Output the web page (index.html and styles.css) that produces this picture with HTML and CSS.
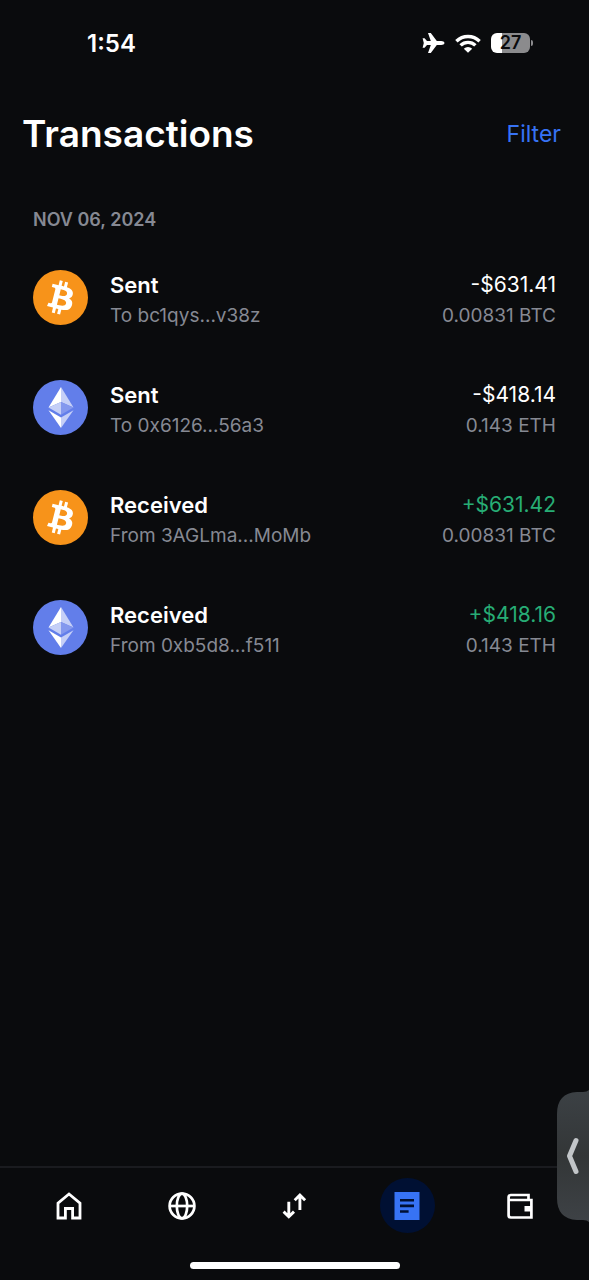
FILE: index.html
```html
<!DOCTYPE html>
<html lang="en">
<head>
<meta charset="utf-8">
<meta name="viewport" content="width=device-width, initial-scale=1">
<title>Transactions</title>
<link rel="stylesheet" href="styles.css">
</head>
<body>
<svg class="defs" aria-hidden="true">
  <symbol id="btc" viewBox="0 0 32 32">
    <circle cx="16" cy="16" r="16" fill="#f7931a"/>
    <path fill="#fff" d="M23.189 14.02c.314-2.096-1.283-3.223-3.465-3.975l.708-2.84-1.728-.43-.69 2.765c-.454-.114-.92-.22-1.385-.326l.695-2.783L15.596 6l-.708 2.839c-.376-.086-.746-.17-1.104-.26l.002-.009-2.384-.595-.46 1.846s1.283.294 1.256.312c.7.175.826.638.805 1.006l-.806 3.235c.048.012.11.03.18.057l-.183-.045-1.13 4.532c-.086.212-.303.531-.793.41.018.025-1.256-.313-1.256-.313l-.858 1.978 2.25.561c.418.105.828.215 1.231.318l-.715 2.872 1.727.43.708-2.84c.472.127.93.245 1.378.357l-.706 2.828 1.728.43.715-2.866c2.948.558 5.164.333 6.097-2.333.752-2.146-.037-3.385-1.588-4.192 1.13-.26 1.98-1.003 2.207-2.538zm-3.95 5.538c-.533 2.147-4.148.986-5.32.695l.95-3.805c1.172.293 4.929.872 4.37 3.11zm.535-5.569c-.487 1.953-3.495.96-4.47.717l.86-3.45c.975.243 4.118.696 3.61 2.733z"/>
  </symbol>
  <symbol id="eth" viewBox="0 0 55 55">
    <circle cx="27.500" cy="27.500" r="27.500" fill="#627eea"/>
    <path fill="#fff" d="M28 7 15.500 27.400 28 22z"/>
    <path fill="#c5cff7" d="M28 7 40.500 27.400 28 22z"/>
    <path fill="#c5cff7" d="M15.500 27.400 28 22v12.800z"/>
    <path fill="#8498ee" d="M40.500 27.400 28 22v12.800z"/>
    <path fill="#fff" d="M15.500 30.300 28 37.600V48z"/>
    <path fill="#c5cff7" d="M40.500 30.300 28 37.600V48z"/>
  </symbol>
</svg>

<div class="screen">
  <div class="status">
    <span class="time">1:54</span>
    <div class="indicators">
      <svg class="plane" viewBox="0 0 23 22" fill="#fff" aria-label="Airplane mode"><path d="M22.500 11c0 1.100-1.600 2-3.300 2h-4.400L8.800 21H6l2.800-8H5l-2.400 2.700H.6L1.800 11 .6 6.300h2L5 9h3.800L6 1h2.800l6 8h4.400c1.700 0 3.300.9 3.300 2z"/></svg>
      <svg class="wifi" viewBox="0 0 26 19" fill="none" stroke="#fff" stroke-width="3.400" aria-label="Wi-Fi"><path d="M1.400 7.200a16.600 16.600 0 0 1 23.200 0M5.600 11.400a10.600 10.600 0 0 1 14.800 0"/><path stroke="none" fill="#fff" d="m13 18.800-4.200-4.100a6 6 0 0 1 8.400 0z"/></svg>
      <div class="battery"><span class="level">27</span><span class="cap"></span></div>
    </div>
  </div>

  <header class="header">
    <h1>Transactions</h1>
    <button class="filter" type="button">Filter</button>
  </header>

  <main class="content">
    <h2>NOV 06, 2024</h2>
    <ul class="list">
      <li class="row">
        <svg class="coin" aria-label="Bitcoin"><use href="#btc"/></svg>
        <div class="details"><span class="kind">Sent</span><span class="sub">To bc1qys...v38z</span></div>
        <div class="amounts"><span class="fiat">-$631.41</span><span class="sub">0.00831 BTC</span></div>
      </li>
      <li class="row">
        <svg class="coin" aria-label="Ethereum"><use href="#eth"/></svg>
        <div class="details"><span class="kind">Sent</span><span class="sub">To 0x6126...56a3</span></div>
        <div class="amounts"><span class="fiat">-$418.14</span><span class="sub">0.143 ETH</span></div>
      </li>
      <li class="row">
        <svg class="coin" aria-label="Bitcoin"><use href="#btc"/></svg>
        <div class="details"><span class="kind">Received</span><span class="sub">From 3AGLma...MoMb</span></div>
        <div class="amounts"><span class="fiat gain">+$631.42</span><span class="sub">0.00831 BTC</span></div>
      </li>
      <li class="row">
        <svg class="coin" aria-label="Ethereum"><use href="#eth"/></svg>
        <div class="details"><span class="kind">Received</span><span class="sub">From 0xb5d8...f511</span></div>
        <div class="amounts"><span class="fiat gain">+$418.16</span><span class="sub">0.143 ETH</span></div>
      </li>
    </ul>
  </main>

  <footer class="dock">
    <nav class="tabs">
      <a class="tab" href="#home" aria-label="Home"><svg viewBox="0 0 28 28" fill="none" stroke="#fff" stroke-width="2.800"><path d="M3 26V11.200L14 2l11 9.200V26h-7.400v-9.500h-7.200V26z"/></svg></a>
      <a class="tab" href="#browse" aria-label="Browse"><svg viewBox="0 0 28 28" fill="none" stroke="#fff" stroke-width="2.700"><circle cx="14" cy="14" r="12.400"/><ellipse cx="14" cy="14" rx="5.200" ry="12.400"/><path d="M1.600 14h24.800"/></svg></a>
      <a class="tab" href="#swap" aria-label="Swap"><svg viewBox="0 0 28 28" fill="none" stroke="#fff" stroke-width="2.900"><path d="M8.800 9.800v15M3.600 19.600l5.200 5.200 5.200-5.200M19.900 18V3M14.700 8.200 19.900 3l5.200 5.200"/></svg></a>
      <a class="tab active" href="#transactions" aria-label="Transactions" aria-current="page"><svg viewBox="0 0 28 28"><path fill="#3773f5" d="M1.500 0h25v28h-25z"/><path stroke="#001033" stroke-width="2.600" d="M7 8.300h14M7 13.900h14M7 19.500h8.600"/></svg></a>
      <a class="tab" href="#wallet" aria-label="Wallet"><svg viewBox="0 0 28 28" fill="none" stroke="#fff" stroke-width="2.700"><path d="M22.500 8V3H4.800A2.400 2.400 0 0 0 2.600 5.400v17.800A2.300 2.300 0 0 0 4.900 25.500h20.500V8H3"/><path stroke="none" fill="#fff" d="M18.500 14h7v5.500h-7z"/></svg></a>
    </nav>
    <div class="home-bar"></div>
  </footer>

  <button class="handle" type="button" aria-label="Open side panel">
    <svg viewBox="0 0 32 132"><defs><linearGradient id="shade" x2="0" y2="1"><stop offset="0" stop-color="#3c4145"/><stop offset=".5" stop-color="#333637"/><stop offset="1" stop-color="#3e4246"/></linearGradient></defs><path fill="url(#shade)" d="M32 0q-2 2-6 2h-6Q0 3 0 24v84q0 21 20 22h6q4 0 6 2z"/><path fill="none" stroke="#c2c5c8" stroke-width="5" stroke-linecap="round" stroke-linejoin="round" d="M19 50.500 12.500 66 19 81.500"/></svg>
  </button>
</div>
</body>
</html>
```
FILE: styles.css
```css
* { box-sizing: border-box; }

body {
  margin: 0;
  background: #0a0b0d;
  color: #fff;
  font-family: Inter, "Liberation Sans", sans-serif;
}

.defs { position: absolute; width: 0; height: 0; }

.screen {
  position: relative;
  min-height: 100vh;
  display: flex;
  flex-direction: column;
}

.status {
  display: flex;
  justify-content: space-between;
  align-items: center;
  height: 86px;
  padding: 0 56px 0 87px;
}

.time { font-size: 24px; font-weight: 600; }

.indicators { display: flex; align-items: center; gap: 10px; }
.plane { width: 23px; height: 22px; }
.wifi { width: 26px; height: 19px; }

.battery { display: flex; align-items: center; gap: 1px; }
.level {
  width: 39px;
  height: 20px;
  border-radius: 6px;
  background: linear-gradient(90deg, #fff 27%, #8b8b8d 27%);
  color: #0a0b0d;
  font-size: 18px;
  font-weight: 600;
  line-height: 20px;
  text-align: center;
}
.cap { width: 2px; height: 6px; border-radius: 0 2px 2px 0; background: #8b8b8d; }

.header {
  display: flex;
  justify-content: space-between;
  align-items: center;
  height: 96px;
  padding: 0 28px 0 22px;
}

h1 { margin: 0; font-size: 37px; font-weight: 600; line-height: 48px; }

.filter {
  border: 0;
  padding: 0;
  background: none;
  color: #3773f5;
  font: inherit;
  font-size: 23px;
  line-height: 32px;
}

.content { flex: 1; padding: 25px 33px; }

h2 { margin: 0; color: #868993; font-size: 18px; font-weight: 600; line-height: 26px; }

.list { list-style: none; margin: 0; padding: 9px 0 0; }

.row { display: flex; align-items: center; gap: 22px; height: 110px; }
.coin { flex: none; width: 55px; height: 55px; }
.details, .amounts { display: flex; flex-direction: column; line-height: 30px; padding-top: 8px; }
.details { flex: 1; }
.amounts { text-align: right; }
.kind { font-size: 22px; font-weight: 600; }
.fiat { font-size: 21px; }
.gain { color: #27ad75; }
.sub { color: #868993; font-size: 19px; line-height: 32px; }

.dock { border-top: 2px solid #1a1b1f; }

.tabs { display: flex; justify-content: space-around; padding: 10px 13px 0; }
.tab { display: grid; place-items: center; width: 55px; height: 55px; border-radius: 50%; }
.tab svg { width: 28px; height: 28px; }
.active { background: #001033; }

.home-bar {
  width: 210px;
  height: 7px;
  margin: 29px auto 11px;
  border-radius: 4px;
  background: #fff;
}

.handle {
  position: absolute;
  right: 0;
  bottom: 58px;
  width: 32px;
  height: 132px;
  border: 0;
  padding: 0;
  background: none;
}
.handle svg { display: block; width: 100%; height: 100%; }
```
